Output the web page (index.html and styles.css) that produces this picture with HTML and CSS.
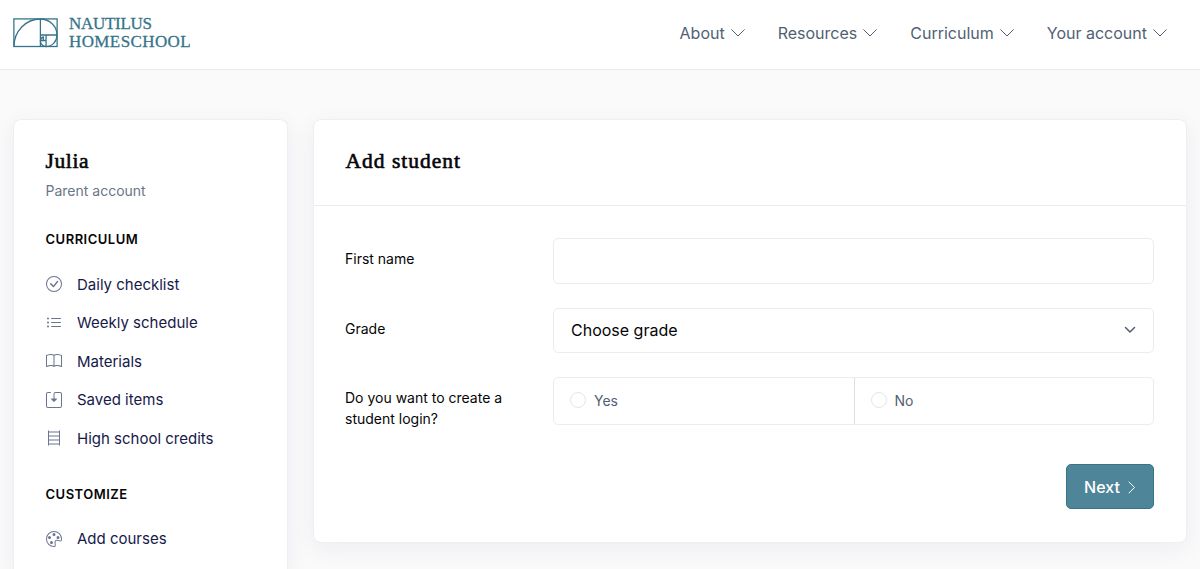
FILE: index.html
```html
<!DOCTYPE html>
<html lang="en">
<head>
  <meta charset="UTF-8">
  <title>Add student - Nautilus Homeschool</title>
  <link rel="stylesheet" href="styles.css">
</head>
<body>

  <header class="navbar">
    <a class="logo" href="#">
      <svg width="45" height="30" viewBox="0 0 46 30" preserveAspectRatio="none" fill="none" stroke="#35748a" stroke-width="1.3">
        <rect x="0.9" y="0.9" width="44.2" height="27.6"/>
        <path d="M28 1v27.500M28 17h17M33.800 17v11.500M28 22.500h5.800"/>
        <path d="M1 28.500A27 27.500 0 0 1 28 1a17 16 0 0 1 17 16a11.200 11.500 0 0 1-11.200 11.500A5.800 5.800 0 0 1 28 22.500q.5-3 3-3.500v3.500"/>
      </svg>
      <span class="logo-text">
        <span class="logo-top">NAUTILUS</span>
        <span class="logo-bottom">HOMESCHOOL</span>
      </span>
    </a>
    <nav class="menu">
      <a href="#">About <svg class="chevron" viewBox="0 0 14 8"><path d="M.7.700 7 7 13.300.7"/></svg></a>
      <a href="#">Resources <svg class="chevron" viewBox="0 0 14 8"><path d="M.7.700 7 7 13.300.7"/></svg></a>
      <a href="#">Curriculum <svg class="chevron" viewBox="0 0 14 8"><path d="M.7.700 7 7 13.300.7"/></svg></a>
      <a href="#">Your account <svg class="chevron" viewBox="0 0 14 8"><path d="M.7.700 7 7 13.300.7"/></svg></a>
    </nav>
  </header>

  <main class="page">
    <aside class="card sidebar">
      <h2 class="julia">Julia</h2>
      <p class="role">Parent account</p>

      <h3>Curriculum</h3>
      <ul>
        <li><a href="#">
          <svg class="icon" viewBox="0 0 16 16"><path d="M8 15A7 7 0 1 1 8 1a7 7 0 0 1 0 14m0 1A8 8 0 1 0 8 0a8 8 0 0 0 0 16"/><path d="m10.970 4.970-.02.022-3.473 4.425-2.093-2.094a.75.75 0 0 0-1.060 1.060L6.970 11.030a.75.75 0 0 0 1.079-.02l3.992-4.990a.75.75 0 0 0-1.071-1.050"/></svg>
          Daily checklist</a></li>
        <li><a href="#">
          <svg class="icon" viewBox="0 0 16 16"><path d="M5 11.500a.5.5 0 0 1 .5-.5h9a.5.5 0 0 1 0 1h-9a.5.5 0 0 1-.5-.5m0-4a.5.5 0 0 1 .5-.5h9a.5.5 0 0 1 0 1h-9a.5.5 0 0 1-.5-.5m0-4a.5.5 0 0 1 .5-.5h9a.5.5 0 0 1 0 1h-9a.5.5 0 0 1-.5-.5m-3 1a1 1 0 1 0 0-2 1 1 0 0 0 0 2m0 4a1 1 0 1 0 0-2 1 1 0 0 0 0 2m0 4a1 1 0 1 0 0-2 1 1 0 0 0 0 2"/></svg>
          Weekly schedule</a></li>
        <li><a href="#">
          <svg class="icon" viewBox="0 0 16 16"><path d="M1 2.828c.885-.37 2.154-.769 3.388-.893 1.330-.134 2.458.063 3.112.752v9.746c-.935-.53-2.120-.603-3.213-.493-1.180.12-2.370.461-3.287.811zm7.500-.141c.654-.689 1.782-.886 3.112-.752 1.234.124 2.503.523 3.388.893v9.923c-.918-.35-2.107-.692-3.287-.81-1.094-.111-2.278-.039-3.213.492zM8 1.783C7.015.936 5.587.81 4.287.94c-1.514.153-3.042.672-3.994 1.105A.5.5 0 0 0 0 2.500v11a.5.5 0 0 0 .707.455c.882-.4 2.303-.881 3.680-1.020 1.409-.142 2.590.087 3.223.877a.5.5 0 0 0 .78 0c.633-.79 1.814-1.019 3.222-.877 1.378.139 2.800.62 3.681 1.020A.5.5 0 0 0 16 13.500v-11a.5.5 0 0 0-.293-.455c-.952-.433-2.480-.952-3.994-1.105C10.413.809 8.985.936 8 1.783"/></svg>
          Materials</a></li>
        <li><a href="#">
          <svg class="icon" viewBox="0 0 16 16"><path d="M2 1a1 1 0 0 0-1 1v12a1 1 0 0 0 1 1h12a1 1 0 0 0 1-1V2a1 1 0 0 0-1-1H9.500a1 1 0 0 0-1 1v4.500h2a.5.5 0 0 1 .354.854l-2.500 2.500a.5.5 0 0 1-.708 0l-2.500-2.500A.5.5 0 0 1 5.500 6.500h2V2a2 2 0 0 1 2-2H14a2 2 0 0 1 2 2v12a2 2 0 0 1-2 2H2a2 2 0 0 1-2-2V2a2 2 0 0 1 2-2h2.500a.5.5 0 0 1 0 1z"/></svg>
          Saved items</a></li>
        <li><a href="#">
          <svg class="icon line" viewBox="0 0 16 16"><path d="M2.500.500v15M13.500.500v15M2.500 2h11M2.500 6h11M2.500 10h11M2.500 14h11"/></svg>
          High school credits</a></li>
      </ul>

      <h3>Customize</h3>
      <ul>
        <li><a href="#">
          <svg class="icon" viewBox="0 0 16 16"><path d="M8 5a1.500 1.500 0 1 0 0-3 1.500 1.500 0 0 0 0 3m4 3a1.500 1.500 0 1 0 0-3 1.500 1.500 0 0 0 0 3M5 6.500a1.500 1.500 0 1 1-3 0 1.500 1.500 0 0 1 3 0m.5 6.500a1.500 1.500 0 1 0 0-3 1.500 1.500 0 0 0 0 3"/><path d="M16 8c0 3.150-1.866 2.585-3.567 2.070C11.420 9.763 10.465 9.473 10 10c-.603.683-.475 1.819-.351 2.920C9.826 14.495 9.996 16 8 16a8 8 0 1 1 8-8m-8 7c.611 0 .654-.171.655-.176.078-.146.124-.464.07-1.119-.014-.168-.037-.37-.061-.591-.052-.464-.112-1.005-.118-1.462-.01-.707.083-1.610.704-2.314.369-.417.845-.578 1.272-.618.404-.038.812.026 1.160.104.343.077.702.186 1.025.284l.028.008c.346.105.658.199.953.266.653.148.904.083.991.024C14.717 9.380 15 9.161 15 8a7 7 0 1 0-7 7"/></svg>
          Add courses</a></li>
      </ul>
    </aside>

    <section class="card content">
      <div class="card-header">
        <h2>Add student</h2>
      </div>
      <form class="card-body">
        <div class="row">
          <label for="name">First name</label>
          <input class="field" type="text" id="name">
        </div>
        <div class="row">
          <label>Grade</label>
          <div class="field select">
            Choose grade
            <svg width="12" height="8" viewBox="0 0 12 8" fill="none" stroke="#525f73" stroke-width="1.5" stroke-linecap="round" stroke-linejoin="round"><path d="M1.500 1.500 6 6l4.500-4.500"/></svg>
          </div>
        </div>
        <div class="row">
          <label>Do you want to create a student login?</label>
          <div class="options">
            <label class="option"><input type="radio" name="login">Yes</label>
            <label class="option"><input type="radio" name="login">No</label>
          </div>
        </div>
        <div class="actions">
          <button type="button">Next <svg width="8" height="14" viewBox="0 0 8 14" fill="none" stroke="#fff" stroke-width="1" stroke-linecap="round"><path d="M1 2 6.500 7.500 1 13"/></svg></button>
        </div>
      </form>
    </section>
  </main>

</body>
</html>
```
FILE: styles.css
```css
* {
  box-sizing: border-box;
}
body {
  margin: 0;
  height: 569px;
  overflow: hidden;
  font-family: Inter, sans-serif;
  font-size: 15px;
  color: #050507;
  background-color: #fafafb;
}
a {
  color: inherit;
  text-decoration: none;
}
h2, h3, p, ul {
  margin: 0;
  padding: 0;
}
ul {
  list-style: none;
}
.navbar {
  display: flex;
  justify-content: space-between;
  height: 70px;
  padding: 0 33px 0 13px;
  background-color: #fff;
  border-bottom: 1px solid #e9eaed;
}
.logo {
  display: flex;
  gap: 11px;
  padding-top: 18px;
}
.logo-text {
  display: flex;
  flex-direction: column;
  gap: 2px;
  margin-top: -2px;
  font-family: "Liberation Serif", serif;
  font-size: 17px;
  line-height: 16px;
  color: #35748a;
  -webkit-text-stroke: 0.3px #35748a;
}
.logo-top {
  letter-spacing: -0.3px;
}
.logo-bottom {
  letter-spacing: 0.4px;
}
.menu {
  display: flex;
  gap: 33px;
  height: 65px;
  align-items: center;
  font-size: 16px;
  color: #525f73;
}
.menu a {
  display: flex;
  align-items: center;
  gap: 6px;
}
.chevron {
  width: 14px;
  height: 8px;
  fill: none;
  stroke: #525f73;
  stroke-width: 1;
  stroke-linecap: round;
}
.page {
  display: grid;
  grid-template-columns: 275px 874px;
  gap: 24.5px;
  align-items: start;
  padding: 49px 13px 0;
}
.card {
  background-color: #fff;
  border: 1px solid #eeeff1;
  border-radius: 8px;
  box-shadow: 0 6px 24px rgba(31, 39, 70, 0.06);
}
h2 {
  font-family: "Liberation Serif", serif;
  font-size: 21.5px;
  font-weight: 400;
  line-height: 26px;
  letter-spacing: 1px;
  -webkit-text-stroke: 0.6px #050507;
}
.julia {
  letter-spacing: 0.6px;
}
/* the sidebar carries on below the fold */
.sidebar {
  height: 450px;
  padding: 28px 31.5px 0;
  border-bottom: 0;
  border-radius: 8px 8px 0 0;
}
.role {
  margin-top: 7px;
  font-size: 14px;
  line-height: 20px;
  color: #6b7588;
}
h3 {
  margin-top: 29px;
  margin-bottom: 17px;
  font-size: 13px;
  font-weight: 600;
  line-height: 18px;
  letter-spacing: 0.5px;
  text-transform: uppercase;
}
ul + h3 {
  margin-top: 27px;
}
li a {
  display: flex;
  align-items: center;
  gap: 15.5px;
  height: 38.5px;
  color: #16194a;
}
.icon {
  width: 16px;
  height: 16px;
  fill: #6b7590;
}
.line {
  fill: none;
  stroke: #6b7590;
}
.content {
  height: 424px;
}
.card-header {
  height: 86px;
  padding: 28px 32px;
  border-bottom: 1px solid #eaebee;
}
.card-body {
  padding: 32px 31.5px;
}
.row {
  display: grid;
  grid-template-columns: 208px 1fr;
  margin-bottom: 24px;
  font-size: 14px;
  line-height: 21px;
}
.row > label {
  padding-top: 10px;
  padding-right: 40px;
}
.field {
  width: 100%;
  height: 45.5px;
  padding: 0 17px;
  background-color: #fff;
  border: 1px solid #ebecef;
  border-radius: 5px;
}
.select {
  display: flex;
  align-items: center;
  justify-content: space-between;
  font-size: 16px;
}
.options {
  display: grid;
  grid-template-columns: 1fr 1fr;
  height: 48px;
  border: 1px solid #ebecef;
  border-radius: 5px;
}
.option {
  display: flex;
  align-items: center;
  gap: 8px;
  padding: 0 0 2px 16px;
  color: #525f73;
}
.option + .option {
  border-left: 1px solid #dcdee3;
}
.option input {
  appearance: none;
  width: 16px;
  height: 16px;
  margin: 0;
  border: 1px solid #e3e5e9;
  border-radius: 50%;
}
.actions {
  display: flex;
  justify-content: flex-end;
  padding-top: 11px;
}
button {
  display: flex;
  align-items: center;
  justify-content: center;
  gap: 8px;
  width: 88px;
  height: 45px;
  font-family: inherit;
  font-size: 16px;
  font-weight: 500;
  color: #fff;
  background-color: #4f8599;
  border: 1px solid #35748a;
  border-radius: 5px;
}
```
